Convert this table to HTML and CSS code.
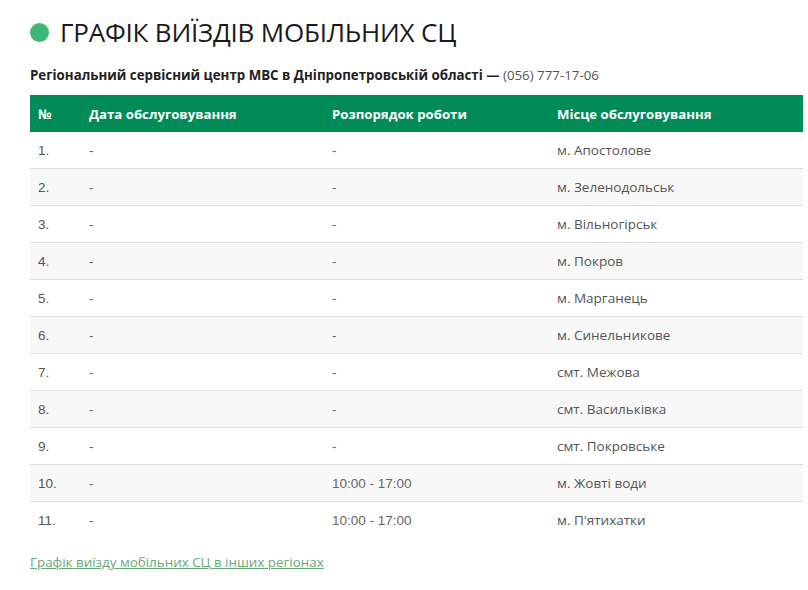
FILE: index.html
```html
<!DOCTYPE html>
<html lang="uk">
<head>
<meta charset="utf-8">
<link rel="stylesheet" href="styles.css">
</head>
<body>
<div class="page">
  <h1 class="title"><span class="dot"></span>ГРАФІК ВИЇЗДІВ МОБІЛЬНИХ СЦ</h1>
  <p class="subtitle"><b>Регіональний сервісний центр МВС в Дніпропетровській області —</b> (056) 777-17-06</p>
  <table class="sched">
    <thead>
      <tr><th class="c1">№</th><th class="c2">Дата обслуговування</th><th class="c3">Розпорядок роботи</th><th class="c4">Місце обслуговування</th></tr>
    </thead>
    <tbody>
      <tr><td class="num">1.</td><td>-</td><td>-</td><td class="place">м. Апостолове</td></tr>
      <tr><td class="num">2.</td><td>-</td><td>-</td><td class="place">м. Зеленодольськ</td></tr>
      <tr><td class="num">3.</td><td>-</td><td>-</td><td class="place">м. Вільногірськ</td></tr>
      <tr><td class="num">4.</td><td>-</td><td>-</td><td class="place">м. Покров</td></tr>
      <tr><td class="num">5.</td><td>-</td><td>-</td><td class="place">м. Марганець</td></tr>
      <tr><td class="num">6.</td><td>-</td><td>-</td><td class="place">м. Синельникове</td></tr>
      <tr><td class="num">7.</td><td>-</td><td>-</td><td class="place">смт. Межова</td></tr>
      <tr><td class="num">8.</td><td>-</td><td>-</td><td class="place">смт. Васильківка</td></tr>
      <tr><td class="num">9.</td><td>-</td><td>-</td><td class="place">смт. Покровське</td></tr>
      <tr><td class="num">10.</td><td>-</td><td>10:00 - 17:00</td><td class="place">м. Жовті води</td></tr>
      <tr><td class="num">11.</td><td>-</td><td>10:00 - 17:00</td><td class="place">м. П'ятихатки</td></tr>
    </tbody>
  </table>
  <a class="more" href="#">Графік виїзду мобільних СЦ в інших регіонах</a>
</div>
</body>
</html>
```

FILE: styles.css
```css
html, body {
  margin: 0;
  padding: 0;
  background: #ffffff;
}
.page {
  width: 773px;
  padding: 13px 5px 0 30px;
  font-family: "Open Sans", "Noto Sans", sans-serif;
  color: #333;
}
.title {
  display: flex;
  align-items: center;
  gap: 11px;
  margin: 0;
  height: 38px;
  font-size: 26px;
  font-weight: 400;
  color: #1a1a1a;
  letter-spacing: -0.2px;
}
.dot {
  width: 19px;
  height: 19px;
  border-radius: 50%;
  background: #3db874;
  flex: none;
}
.subtitle {
  margin: 15px 0 0;
  font-size: 13.3px;
  line-height: 18px;
  color: #555;
}
.subtitle b {
  color: #222;
  font-weight: 700;
}
.sched {
  margin-top: 11px;
  width: 773px;
  border-collapse: collapse;
  font-size: 13.5px;
}
.sched th {
  background: #008b57;
  color: #fff;
  font-weight: 700;
  text-align: left;
  height: 37px;
  padding: 0 8px;
  font-size: 13.2px;
}
.c1 { width: 35px; }
.c2 { width: 227px; }
.c3 { width: 209px; }
.sched td {
  height: 36px;
  padding: 0 8px;
  border-bottom: 1px solid #dedede;
  color: #666;
  font-family: "Liberation Sans", Arial, sans-serif;
}
.sched td.place {
  font-family: "Open Sans", "Noto Sans", sans-serif;
  color: #555;
}
.sched td.num {
  color: #555;
}
.sched tbody tr:nth-child(even) td {
  background: #f8f8f8;
}
.sched tbody tr:last-child td {
  border-bottom: none;
}
.more {
  display: inline-block;
  margin-top: 15px;
  font-size: 13.4px;
  color: #67a97a;
  text-decoration: underline;
}
```
